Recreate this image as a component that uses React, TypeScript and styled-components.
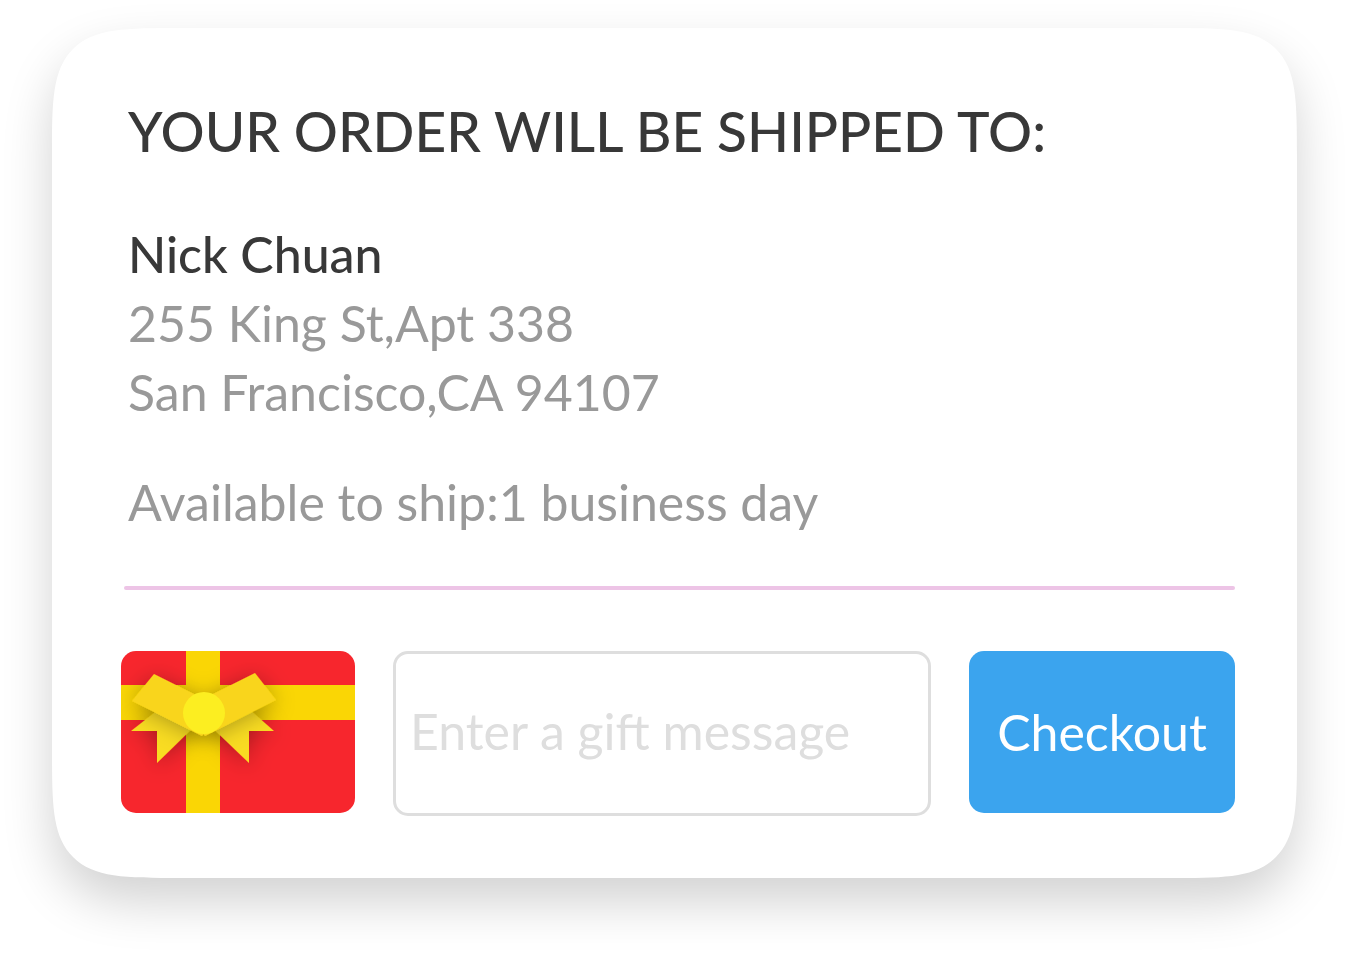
import React from "react";
import styled, { createGlobalStyle } from "styled-components";

const GlobalStyle = createGlobalStyle`
  *, *::before, *::after { box-sizing: border-box; }
  body {
    margin: 0;
    background: #ffffff;
    font-family: Lato, "Open Sans", sans-serif;
  }
`;

const Page = styled.main`
  padding: 28px 53px 76px 52px;
`;

const Card = styled.form`
  padding: 70px 62px 62px 69px;
  border-radius: 72px;
  background: #ffffff;
  box-shadow: 0 24px 50px rgba(0, 0, 0, 0.18);

  @supports (corner-shape: squircle) {
    border-radius: 132px;
    corner-shape: squircle;
  }
`;

const Details = styled.section`
  padding-left: 7px;
`;

const Title = styled.h1`
  margin: 0 0 56px;
  color: #383838;
  font-size: 55px;
  font-weight: 500;
  line-height: 66px;
`;

const Line = styled.p<{ $strong?: boolean }>`
  margin: 0;
  color: ${({ $strong }) => ($strong ? "#383838" : "#999999")};
  font-size: 50px;
  font-weight: ${({ $strong }) => ($strong ? 500 : 400)};
  line-height: 69px;
`;

const Address = styled.address`
  margin-bottom: 41px;
  font-style: normal;
`;

const Rule = styled.hr`
  height: 4px;
  margin: 49px 0 61px 3px;
  border: 0;
  border-radius: 2px;
  background: #edc4e6;
`;

const Actions = styled.div`
  display: flex;
  align-items: flex-start;
  gap: 38px;
`;

const GiftCard = styled.svg`
  flex: none;
  width: 234px;
  height: 162px;
  border-radius: 15px;
`;

const MessageInput = styled.input`
  flex: 1;
  min-width: 0;
  height: 165px;
  padding: 0 14px 6px;
  border: 3px solid #dedede;
  border-radius: 15px;
  background: #ffffff;
  color: #383838;
  font-family: inherit;
  font-size: 50px;
  font-weight: 400;

  &::placeholder {
    color: #dedede;
    opacity: 1;
  }
`;

const CheckoutButton = styled.button`
  flex: none;
  width: 266px;
  height: 162px;
  padding: 0;
  border: 0;
  border-radius: 15px;
  background: #3ba4ee;
  color: #ffffff;
  font-family: inherit;
  font-size: 50px;
  font-weight: 400;
  cursor: pointer;
`;

function Gift() {
  return (
    <GiftCard viewBox="0 0 234 162" role="img" aria-label="Gift card">
      <defs>
        <filter id="bowShadow" x="-40%" y="-60%" width="180%" height="220%">
          <feDropShadow dx="0" dy="3" stdDeviation="11" floodColor="#000000" floodOpacity="0.3" />
        </filter>
      </defs>
      <rect width="234" height="162" fill="#f7262d" />
      <rect y="34" width="234" height="35" fill="#fad605" />
      <rect x="65" width="34" height="162" fill="#fad605" />
      <g fill="#f9dc20" filter="url(#bowShadow)">
        <path d="M10 80H36V112L83 66L56 44Z" />
        <path d="M153 80H128V112L80 66L112 44Z" />
      </g>
      <g fill="#f9d51a" filter="url(#bowShadow)">
        <path d="M33 23L11 50L81 85L103 58Z" />
        <path d="M134 22L155 49L84 85L62 58Z" />
      </g>
      <circle cx="83" cy="62" r="21" fill="#fcee21" />
    </GiftCard>
  );
}

export default function App() {
  return (
    <>
      <GlobalStyle />
      <Page>
        <Card onSubmit={(event) => event.preventDefault()}>
          <Details>
            <Title>YOUR ORDER WILL BE SHIPPED TO:</Title>
            <Address>
              <Line $strong>Nick Chuan</Line>
              <Line>255 King St,Apt 338</Line>
              <Line>San Francisco,CA 94107</Line>
            </Address>
            <Line>Available to ship:1 business day</Line>
          </Details>
          <Rule />
          <Actions>
            <Gift />
            <MessageInput type="text" aria-label="Gift message" placeholder="Enter a gift message" />
            <CheckoutButton type="submit">Checkout</CheckoutButton>
          </Actions>
        </Card>
      </Page>
    </>
  );
}
